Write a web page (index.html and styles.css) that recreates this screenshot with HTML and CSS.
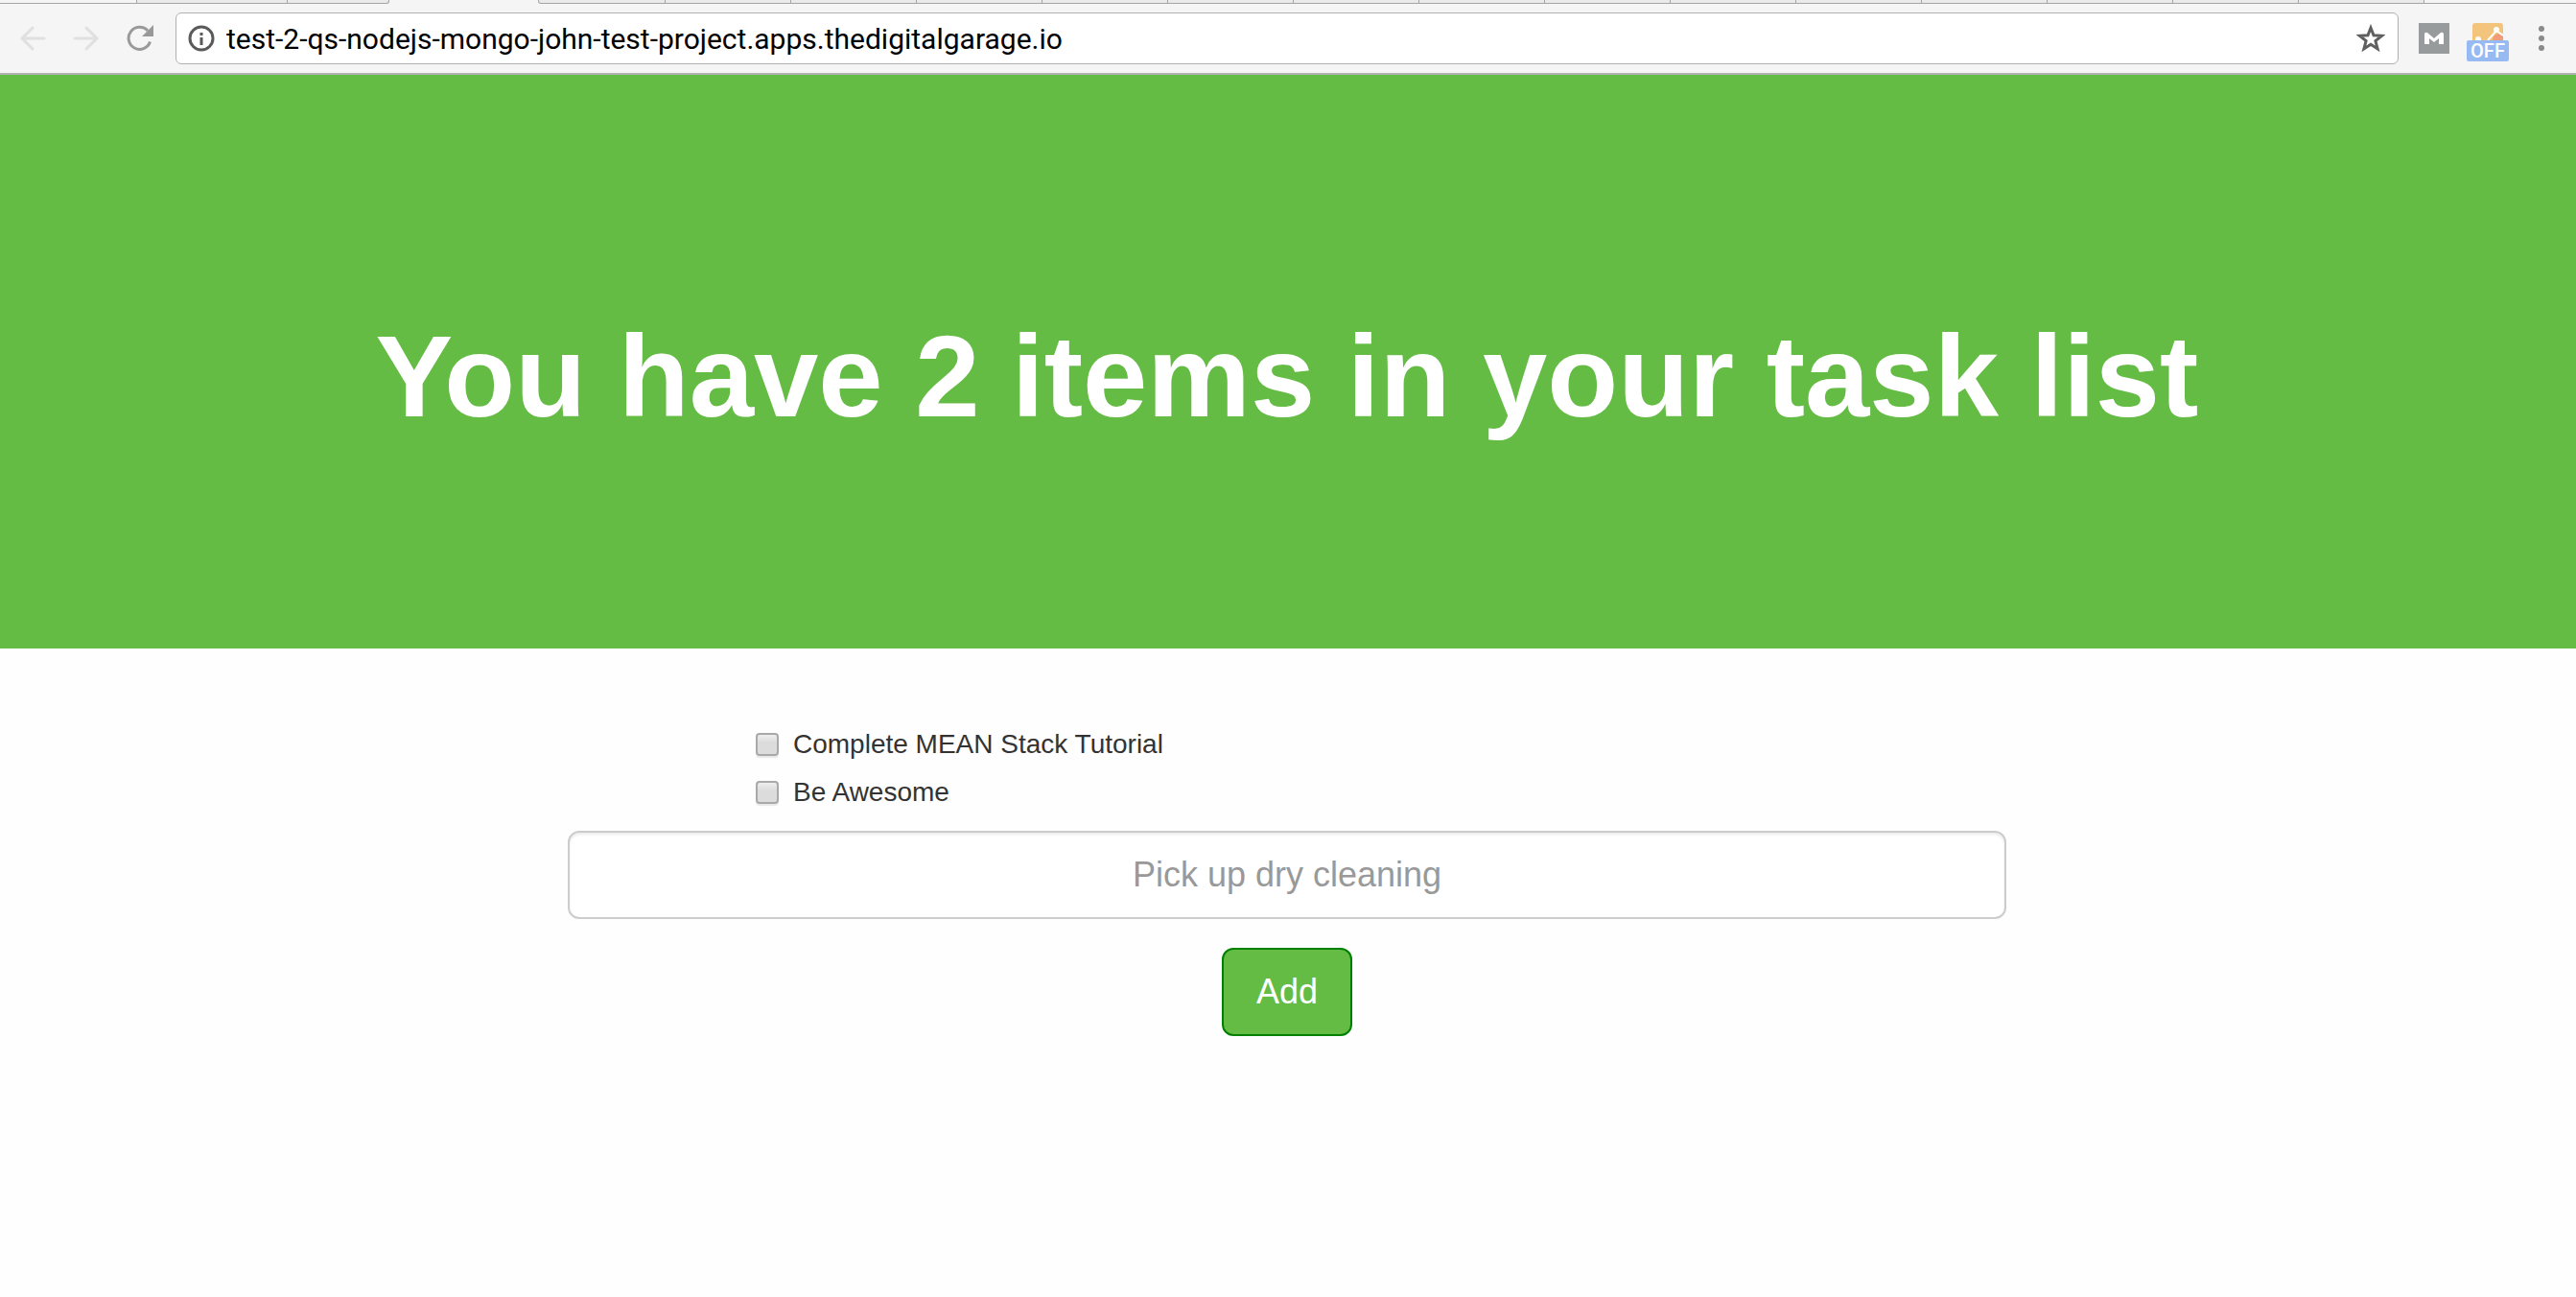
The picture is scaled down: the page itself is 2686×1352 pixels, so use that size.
FILE: index.html
```html
<!DOCTYPE html>
<html lang="en">
<head>
<meta charset="utf-8">
<title>Task list</title>
<link rel="stylesheet" href="styles.css">
</head>
<body>
<header class="browser">
  <div class="tabs" aria-hidden="true">
    <span class="tab tab-first"></span>
    <span class="tab tab-wide"></span>
    <span class="tab tab-last"></span>
    <span class="tab-active"></span>
    <span class="tab start"></span>
    <span class="tab"></span><span class="tab"></span><span class="tab"></span><span class="tab"></span>
    <span class="tab"></span><span class="tab"></span><span class="tab"></span><span class="tab"></span>
    <span class="tab"></span><span class="tab"></span><span class="tab"></span><span class="tab"></span>
    <span class="tab"></span><span class="tab"></span>
    <span class="tab-rest"></span>
  </div>
  <nav class="toolbar">
    <button class="icon-button" type="button" aria-label="Back" disabled>
      <svg width="28" height="28" viewBox="0 0 28 28" fill="none" stroke="#e0e0e0" stroke-width="3" stroke-linecap="round"><path d="M26 14H3M14 3 3 14l11 11"/></svg>
    </button>
    <button class="icon-button" type="button" aria-label="Forward" disabled>
      <svg width="28" height="28" viewBox="0 0 28 28" fill="none" stroke="#e0e0e0" stroke-width="3" stroke-linecap="round"><path d="M2 14h23M14 3l11 11-11 11"/></svg>
    </button>
    <button class="icon-button" type="button" aria-label="Reload">
      <svg width="28" height="28" viewBox="0 0 28 28"><path d="M24.500 17.500A11.500 11.500 0 1 1 22 6" fill="none" stroke="#999" stroke-width="3"/><path d="M28 0v12H16z" fill="#999"/></svg>
    </button>
    <div class="address">
      <svg width="28" height="28" viewBox="0 0 28 28"><circle cx="14" cy="14" r="12" fill="none" stroke="#5a5a5a" stroke-width="3"/><path d="M12.500 8h3v3h-3zM12.500 13h3v8h-3z" fill="#5a5a5a"/></svg>
      <input class="url" type="text" aria-label="Address" value="test-2-qs-nodejs-mongo-john-test-project.apps.thedigitalgarage.io">
      <button class="star" type="button" aria-label="Bookmark">
        <svg width="30" height="30" viewBox="0 0 30 30" fill="none" stroke="#5f5f5f" stroke-width="3"><path d="m15 4 3 7.800 8.500.5-6.600 5.300 2.200 8.300-7.100-4.600-7.100 4.600 2.200-8.300-6.600-5.300 8.500-.5z"/></svg>
      </button>
    </div>
    <button class="extension" type="button" aria-label="M extension">
      <svg width="32" height="32" viewBox="0 0 32 32"><path d="M0 0h32v32H0z" fill="#979b9b"/><path d="M6 22V12q0-3 3-2l7 6 7-6q3-1 3 2v10h-5v-6l-5 4-5-4v6z" fill="#fff"/></svg>
    </button>
    <button class="extension chart" type="button">
      <svg width="32" height="18" viewBox="0 0 32 18"><path d="M0 18V3q0-3 3-3h26q3 0 3 3v15z" fill="#f2c47c"/><circle cx="28" cy="18" r="7" fill="#f19b78"/><path d="m16 18 9-10 7 5" fill="none" stroke="#fff" stroke-width="2"/><circle cx="25" cy="7" r="3" fill="#fff"/><circle cx="6" cy="17" r="3" fill="#fff"/></svg>
      <span class="badge">OFF</span>
    </button>
    <button class="menu" type="button" aria-label="Menu">
      <svg width="6" height="26" viewBox="0 0 6 26" fill="#8a8a8a"><circle cx="3" cy="3" r="3"/><circle cx="3" cy="13" r="3"/><circle cx="3" cy="23" r="3"/></svg>
    </button>
  </nav>
</header>
<main>
  <section class="hero"><h1>You have 2 items in your task list</h1></section>
  <form class="tasks">
    <div class="list">
      <label class="task"><input type="checkbox">Complete MEAN Stack Tutorial</label>
      <label class="task"><input type="checkbox">Be Awesome</label>
    </div>
    <input class="new-task" type="text" aria-label="New task" placeholder="Pick up dry cleaning">
    <button class="add" type="button">Add</button>
  </form>
</main>
</body>
</html>
```
FILE: styles.css
```css
* { box-sizing: border-box; }
body {
  margin: 0;
  background: #fefefe;
  color: #333;
  font-family: "Liberation Sans", Arial, sans-serif;
}
button {
  margin: 0;
  padding: 0;
  border: 0;
  background: none;
  font: inherit;
}
svg { display: block; flex: none; }

.browser {
  background: #f5f5f5;
  border-bottom: 2px solid #b3b3b3;
}
.tabs { display: flex; height: 4px; }
.tab {
  width: 131px;
  background: #eaeaea;
  border-right: 1px solid #a5a5a5;
  border-bottom: 1px solid #a5a5a5;
}
.tab-first { width: 143px; background: #f5f5f5; }
.tab-wide { width: 157px; }
.tab-last { width: 106px; border-bottom-right-radius: 3px; }
.tab-active { width: 155px; }
.start { width: 133px; border-left: 1px solid #a5a5a5; border-bottom-left-radius: 3px; }
.tab-rest { flex: 1; border-bottom: 1px solid #a5a5a5; }

.toolbar {
  display: flex;
  align-items: center;
  height: 72px;
  padding: 0 33px 0 20px;
}
.icon-button { width: 28px; margin-right: 28px; }
.address {
  flex: 1;
  display: flex;
  align-items: center;
  height: 54px;
  margin: 0 21px 0 -5px;
  padding: 0 13px 0 12px;
  background: #fff;
  border: 1px solid #b0b0b0;
  border-radius: 6px;
}
.url {
  flex: 1;
  min-width: 0;
  margin-left: 12px;
  padding: 2px 0 0;
  border: 0;
  background: none;
  color: #000;
  font: 30px/36px Roboto, sans-serif;
}
.chart {
  display: flex;
  flex-direction: column;
  align-items: center;
  margin: 8px 31px 0 18px;
}
.badge {
  width: 44px;
  border-radius: 2px;
  background: #98baf2;
  color: #fff;
  font: 500 20px/22px Roboto, sans-serif;
}

.hero {
  display: flex;
  align-items: center;
  justify-content: center;
  min-height: 598px;
  padding: 90px 62px 60px 60px;
  background: #64bc45;
  color: #fff;
}
h1 {
  margin: 0;
  font-size: 121px;
  font-weight: 700;
  line-height: 140px;
  text-align: center;
}
.tasks {
  display: flex;
  flex-direction: column;
  align-items: center;
  width: 1502px;
  max-width: 100%;
  margin: 0 auto;
  padding: 80px 2px 0 0;
}
.list {
  display: flex;
  flex-direction: column;
  align-items: flex-start;
  gap: 10px;
  width: 1108px;
  max-width: 100%;
}
.task {
  display: flex;
  align-items: center;
  gap: 15px;
  font-size: 28px;
  line-height: 40px;
}
.task input {
  appearance: none;
  width: 24px;
  height: 24px;
  margin: 0;
  border: 2px solid #a9a9a9;
  border-radius: 4px;
  background: linear-gradient(#eee, #dcdcdc 40%);
  box-shadow: 0 2px 1px #e8e8e8;
}
.new-task {
  width: 100%;
  height: 92px;
  margin-top: 20px;
  padding: 0 32px;
  border: 2px solid #ccc;
  border-radius: 12px;
  background: #fff;
  box-shadow: inset 0 2px 3px rgba(0, 0, 0, .08);
  font: 36px/48px "Liberation Sans", Arial, sans-serif;
  text-align: center;
}
.new-task::placeholder { color: #999; }
.add {
  width: 136px;
  height: 92px;
  margin-top: 30px;
  border: 2px solid green;
  border-radius: 12px;
  background: #64bc45;
  color: #fff;
  font-size: 36px;
  line-height: 48px;
}
```
